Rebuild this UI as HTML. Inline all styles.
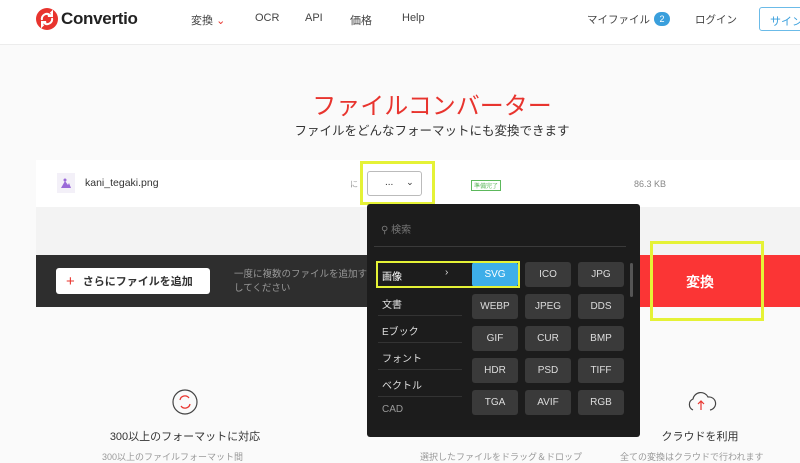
<!DOCTYPE html>
<html><head><meta charset="utf-8"><style>
*{margin:0;padding:0;box-sizing:border-box}
body{width:800px;height:457px;overflow:hidden;background:#fafafa;font-family:"Liberation Sans","Noto Sans CJK JP",sans-serif;position:relative;color:#333}
.a{position:absolute}
.hdr{left:0;top:0;width:800px;height:45px;background:#fff;border-bottom:1px solid #ececec}
.nav{font-size:11px;color:#444;top:12px}
.cell{position:absolute;width:46px;height:25px;background:#3a3a3a;border-radius:3px;color:#ddd;font-size:10px;text-align:center;line-height:25px}
.cat{position:absolute;left:382px;font-size:10px;color:#ddd}
.sep{position:absolute;left:378px;width:84px;height:1px;background:#333}
</style></head><body>
<div class="a hdr"></div>
<svg class="a" style="left:36px;top:8px" width="22" height="22" viewBox="0 0 22 22"><circle cx="11" cy="11" r="11" fill="#e8342e"/><path d="M6 12a5 5 0 0 1 8-5l-2 1h4V4l-1.5 1.5M16 10a5 5 0 0 1-8 5l2-1H6v4l1.5-1.5" stroke="#fff" stroke-width="2" fill="none"/></svg>
<div class="a" style="left:61px;top:9px;font-size:17px;font-weight:bold;color:#222;letter-spacing:-0.3px">Convertio</div>
<div class="a nav" style="left:191px">変換 <span style="color:#e8342e">⌄</span></div>
<div class="a nav" style="left:255px">OCR</div>
<div class="a nav" style="left:305px">API</div>
<div class="a nav" style="left:350px">価格</div>
<div class="a nav" style="left:402px">Help</div>
<div class="a nav" style="left:587px;font-size:10.5px">マイファイル</div>
<div class="a" style="left:654px;top:12px;width:16px;height:14px;border-radius:7px;background:#3a9fdc;color:#fff;font-size:9px;text-align:center;line-height:14px">2</div>
<div class="a nav" style="left:695px;font-size:10.5px">ログイン</div>
<div class="a" style="left:759px;top:7px;width:60px;height:24px;border:1px solid #6bbbe8;border-radius:3px;color:#3a9fdc;font-size:11px;padding:5px 10px">サイン</div>
<div class="a" style="left:0;top:86px;width:864px;text-align:center;font-size:24px;color:#e8342e">ファイルコンバーター</div>
<div class="a" style="left:0;top:120px;width:864px;text-align:center;font-size:12.5px;color:#333">ファイルをどんなフォーマットにも変換できます</div>
<div class="a" style="left:36px;top:160px;width:764px;height:47px;background:#fff"></div>
<div class="a" style="left:57px;top:173px;width:18px;height:20px;background:#f3f0f8"></div>
<svg class="a" style="left:61px;top:178px" width="10" height="10"><path d="M0 10L4 3 7 7 8 5 10 10Z" fill="#9a6ad8"/><circle cx="4" cy="2" r="1.5" fill="#9a6ad8"/></svg>
<div class="a" style="left:85px;top:177px;font-size:10.5px;color:#333">kani_tegaki.png</div>
<div class="a" style="left:350px;top:179px;font-size:8px;color:#999">に</div>
<div class="a" style="left:367px;top:171px;width:55px;height:25px;border:1px solid #bbb;border-radius:3px;background:#fff;font-size:10px;padding:5px 0 0 17px">... <span style="margin-left:10px;font-size:9px">⌄</span></div>
<div class="a" style="left:360px;top:161px;width:75px;height:44px;border:3px solid #e5f236"></div>
<div class="a" style="left:471px;top:180px;border:1px solid #5cb85c;color:#5cb85c;font-size:6px;padding:0 2px">準備完了</div>
<div class="a" style="left:634px;top:179px;font-size:9px;color:#888">86.3 KB</div>
<div class="a" style="left:36px;top:207px;width:764px;height:48px;background:#f3f3f3"></div>
<div class="a" style="left:36px;top:255px;width:604px;height:52px;background:#2e2e2e"></div>
<div class="a" style="left:640px;top:255px;width:160px;height:52px;background:#fb3535"></div>
<div class="a" style="left:686px;top:272px;color:#fff;font-size:14px;font-weight:bold">変換</div>
<div class="a" style="left:650px;top:241px;width:114px;height:80px;border:3px solid #e5f236"></div>
<div class="a" style="left:56px;top:268px;width:154px;height:26px;background:#fff;border-radius:3px;font-size:11px;font-weight:bold;padding:5px 0 0 10px;color:#333"><span style="color:#e8342e;font-size:15px;font-weight:normal;vertical-align:-1px;margin-right:8px">+</span>さらにファイルを追加</div>
<div class="a" style="left:234px;top:268px;font-size:9.5px;color:#999;line-height:14px">一度に複数のファイルを追加す<br>してください</div>
<div class="a" style="left:367px;top:204px;width:273px;height:233px;background:#1c1c1c;border-radius:3px"></div>
<div class="a" style="left:381px;top:221px;font-size:10px;color:#777">⚲ 検索</div>
<div class="a" style="left:374px;top:246px;width:252px;height:1px;background:#3a3a3a"></div>
<div class="cat" style="top:268px;color:#fff">画像</div><div class="cat" style="left:445px;top:267px;color:#ddd">›</div>
<div class="cat" style="top:296px">文書</div><div class="sep" style="top:315px"></div>
<div class="cat" style="top:323px">Eブック</div><div class="sep" style="top:342px"></div>
<div class="cat" style="top:350px">フォント</div><div class="sep" style="top:369px"></div>
<div class="cat" style="top:377px">ベクトル</div><div class="sep" style="top:396px"></div>
<div class="cat" style="top:404px;color:#999">CAD</div>
<div class="cell" style="left:472px;top:262px;background:#3daee9;color:#fff">SVG</div>
<div class="cell" style="left:525px;top:262px">ICO</div><div class="cell" style="left:578px;top:262px">JPG</div>
<div class="cell" style="left:472px;top:294px">WEBP</div><div class="cell" style="left:525px;top:294px">JPEG</div><div class="cell" style="left:578px;top:294px">DDS</div>
<div class="cell" style="left:472px;top:326px">GIF</div><div class="cell" style="left:525px;top:326px">CUR</div><div class="cell" style="left:578px;top:326px">BMP</div>
<div class="cell" style="left:472px;top:358px">HDR</div><div class="cell" style="left:525px;top:358px">PSD</div><div class="cell" style="left:578px;top:358px">TIFF</div>
<div class="cell" style="left:472px;top:390px">TGA</div><div class="cell" style="left:525px;top:390px">AVIF</div><div class="cell" style="left:578px;top:390px">RGB</div>
<div class="a" style="left:630px;top:263px;width:3px;height:34px;background:#555;border-radius:2px"></div>
<div class="a" style="left:376px;top:261px;width:144px;height:27px;border:2px solid #e5f236"></div>
<svg class="a" style="left:171px;top:388px" width="28" height="28"><circle cx="14" cy="14" r="12" fill="none" stroke="#444" stroke-width="1.2"/><path d="M9 12a5 5 0 0 1 9-2M19 16a5 5 0 0 1-9 2" stroke="#e8342e" stroke-width="1.3" fill="none"/></svg>
<div class="a" style="left:85px;top:428px;width:200px;text-align:center;font-size:11px;color:#333;white-space:nowrap">300以上のフォーマットに対応</div>
<div class="a" style="left:102px;top:450px;width:170px;font-size:9px;color:#999;white-space:nowrap">300以上のファイルフォーマット間</div>
<div class="a" style="left:420px;top:450px;width:200px;font-size:9px;color:#999;white-space:nowrap">選択したファイルをドラッグ＆ドロップ</div>
<svg class="a" style="left:685px;top:388px" width="32" height="26"><path d="M8 22a6 6 0 0 1 0-11 8 8 0 0 1 15-2 6 6 0 0 1 2 13" fill="none" stroke="#444" stroke-width="1.2"/><path d="M16 22v-9M13 16l3-3 3 3" stroke="#e8342e" stroke-width="1.2" fill="none"/></svg>
<div class="a" style="left:640px;top:428px;width:120px;text-align:center;font-size:11px;color:#333">クラウドを利用</div>
<div class="a" style="left:620px;top:450px;width:200px;font-size:9px;color:#999;white-space:nowrap">全ての変換はクラウドで行われます</div>
</body></html>
